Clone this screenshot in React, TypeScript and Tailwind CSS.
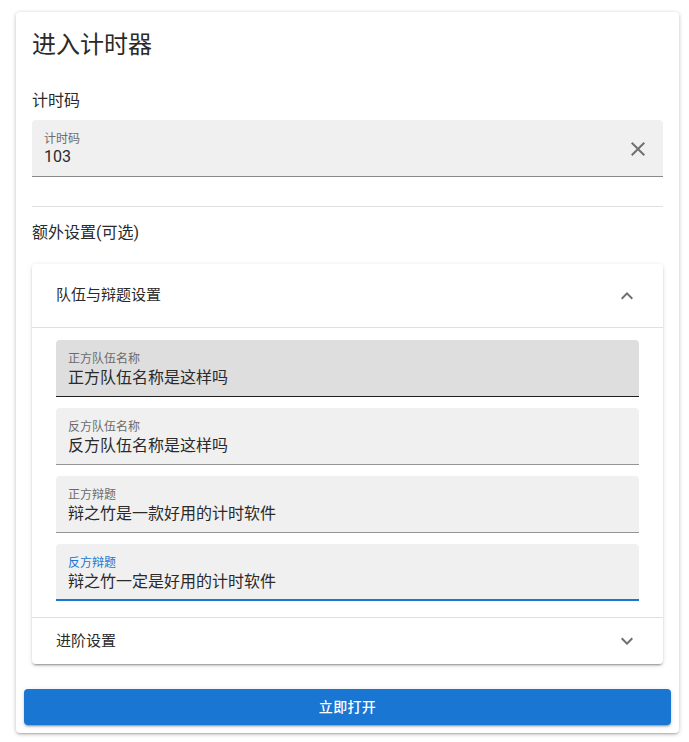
import React from 'react';

const font = { fontFamily: 'Roboto, "Noto Sans CJK SC", sans-serif' };

type FieldProps = {
  label: string;
  value: string;
  state?: 'normal' | 'hover' | 'focus';
};

const Field: React.FC<FieldProps> = ({ label, value, state = 'normal' }) => {
  const box =
    state === 'hover'
      ? 'bg-[#dedede] border-b border-[#1f1f1f] h-[57px]'
      : state === 'focus'
      ? 'bg-[#f0f0f0] border-b-2 border-[#1976d2] h-[57px]'
      : 'bg-[#f0f0f0] border-b border-[#949494] h-[57px]';
  return (
    <div className={`rounded-t px-3 pt-[11px] ${box}`}>
      <div className={`text-xs leading-4 ${state === 'focus' ? 'text-[#1976d2]' : 'text-[#6b6b6b]'}`}>{label}</div>
      <div className="mt-[1px] text-base leading-5 text-[#2a2a2a]">{value}</div>
    </div>
  );
};

const App: React.FC = () => {
  return (
    <div className="w-[689px] h-[742px] bg-white pt-3 pl-4" style={font}>
      <div className="w-[663px] rounded bg-white shadow-[0_2px_2px_-1px_rgba(0,0,0,0.2),0_1px_4px_0_rgba(0,0,0,0.14),0_1px_5px_0_rgba(0,0,0,0.1)]">
        {/* Title */}
        <div className="px-4 pt-[17px] text-2xl leading-8 text-[#2a2a2a]">进入计时器</div>

        <div className="px-4">
          <div className="mt-7 text-base leading-6 text-[#2a2a2a]">计时码</div>

          {/* Code field */}
          <div className="mt-[7px] flex h-[57px] items-start rounded-t border-b border-[#8a8a8a] bg-[#f0f0f0] pl-3 pr-[13px] pt-[11px]">
            <div className="flex-1">
              <div className="text-xs leading-4 text-[#6b6b6b]">计时码</div>
              <div className="text-base leading-5 text-[#2a2a2a]">103</div>
            </div>
            <svg viewBox="0 0 24 24" className="mt-[6px] h-6 w-6 fill-[#707070]">
              <path d="M19,6.41L17.59,5L12,10.59L6.41,5L5,6.41L10.59,12L5,17.59L6.41,19L12,13.41L17.59,19L19,17.59L13.41,12L19,6.41Z" />
            </svg>
          </div>

          <div className="mt-[29px] h-px bg-[#e0e0e0]" />

          <div className="mt-[14px] text-base leading-6 text-[#2a2a2a]">额外设置(可选)</div>

          {/* Expansion panels */}
          <div className="mt-[19px] rounded bg-white shadow-[0_3px_1px_-2px_rgba(0,0,0,0.2),0_2px_2px_0_rgba(0,0,0,0.14),0_1px_5px_0_rgba(0,0,0,0.12)]">
            <div className="flex h-16 items-center justify-between border-b border-[#e0e0e0] pl-6 pr-6">
              <span className="text-[15px] text-[#2a2a2a]">队伍与辩题设置</span>
              <svg viewBox="0 0 24 24" className="h-6 w-6 fill-[#6e6e6e]">
                <path d="M7.41,15.41L12,10.83L16.59,15.41L18,14L12,8L6,14L7.41,15.41Z" />
              </svg>
            </div>
            <div className="flex flex-col gap-[11px] px-6 pt-3 pb-4">
              <Field label="正方队伍名称" value="正方队伍名称是这样吗" state="hover" />
              <Field label="反方队伍名称" value="反方队伍名称是这样吗" />
              <Field label="正方辩题" value="辩之竹是一款好用的计时软件" />
              <Field label="反方辩题" value="辩之竹一定是好用的计时软件" state="focus" />
            </div>
            <div className="flex h-[47px] items-center justify-between border-t border-[#e0e0e0] px-6">
              <span className="text-[15px] text-[#2a2a2a]">进阶设置</span>
              <svg viewBox="0 0 24 24" className="h-6 w-6 fill-[#6e6e6e]">
                <path d="M7.41,8.58L12,13.17L16.59,8.58L18,10L12,16L6,10L7.41,8.58Z" />
              </svg>
            </div>
          </div>
        </div>

        {/* Action */}
        <div className="px-2 pt-[25px] pb-2">
          <button className="h-9 w-full rounded bg-[#1976d2] text-sm font-medium tracking-wide text-white shadow-[0_3px_1px_-2px_rgba(0,0,0,0.2),0_2px_2px_0_rgba(0,0,0,0.14),0_1px_5px_0_rgba(0,0,0,0.12)]">
            立即打开
          </button>
        </div>
      </div>
    </div>
  );
};

export default App;
